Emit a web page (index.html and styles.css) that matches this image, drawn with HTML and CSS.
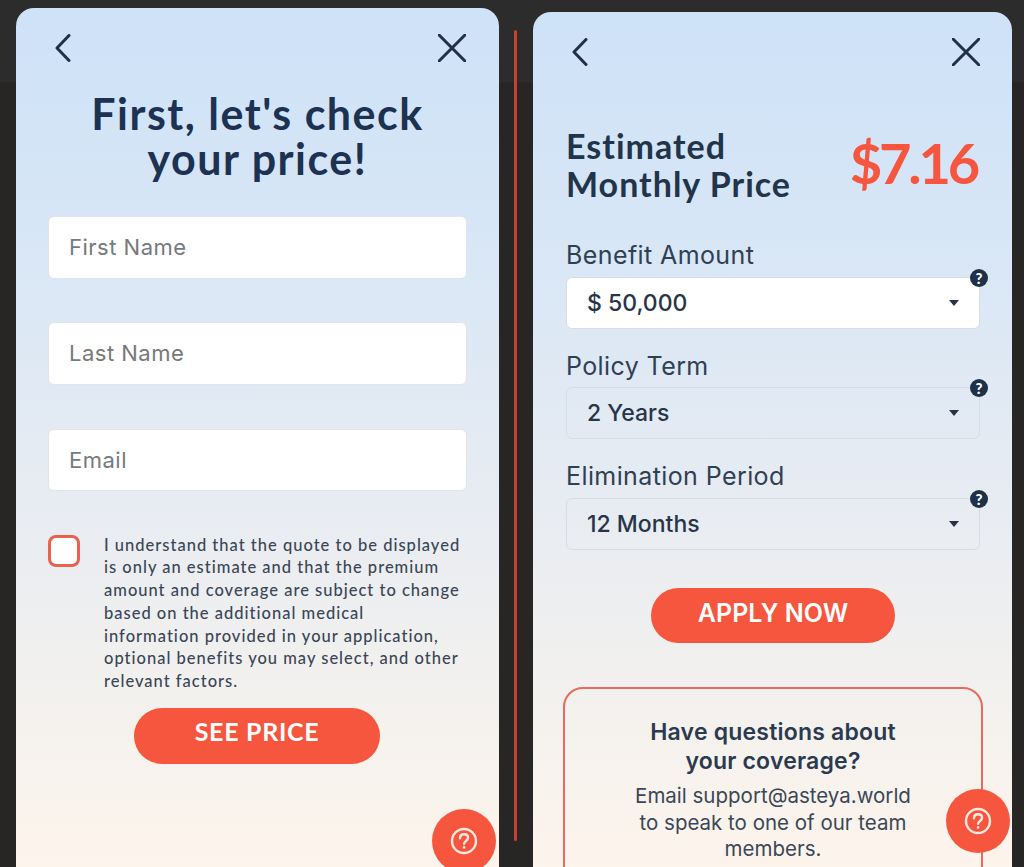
FILE: index.html
```html
<!DOCTYPE html>
<html lang="en">
<head>
    <meta charset="UTF-8">
    <title>Asteya quote</title>
    <link rel="stylesheet" href="styles.css">
</head>
<body>
    <div class="screens">
        <!-- Quote form -->
        <section class="panel panel-left">
            <div class="topbar">
                <svg class="icon-back" width="16" height="28" viewBox="0 0 16 28"><path d="M14 1.500 2 14l12 12.500"/></svg>
                <svg class="icon-close" width="28" height="28" viewBox="0 0 28 28"><path d="M1 1l26 26M27 1 1 27"/></svg>
            </div>
            <h1 class="title">First, let's check<br>your price!</h1>
            <div class="fields">
                <div class="text-input">First Name</div>
                <div class="text-input">Last Name</div>
                <div class="text-input">Email</div>
            </div>
            <div class="consent">
                <span class="checkbox"></span>
                <p>I understand that the quote to be displayed<br>is only an estimate and that the premium<br>amount and coverage are subject to change<br>based on the additional medical<br>information provided in your application,<br>optional benefits you may select, and other<br>relevant factors.</p>
            </div>
            <button class="cta cta-price">SEE PRICE</button>
            <div class="help help-left">
                <svg width="28" height="28" viewBox="0 0 28 28"><circle cx="14" cy="14" r="12"/><path d="M10 11.200c0-2.400 1.800-3.900 4.100-3.900s4 1.400 4 3.500c0 3-4 3.300-4 6"/><circle class="dot" cx="14.100" cy="20.400" r="1.300"/></svg>
            </div>
        </section>

        <div class="divider"></div>

        <!-- Estimate -->
        <section class="panel panel-right">
            <div class="topbar">
                <svg class="icon-back" width="16" height="28" viewBox="0 0 16 28"><path d="M14 1.500 2 14l12 12.500"/></svg>
                <svg class="icon-close" width="28" height="28" viewBox="0 0 28 28"><path d="M1 1l26 26M27 1 1 27"/></svg>
            </div>
            <div class="estimate">
                <h2>Estimated<br>Monthly Price</h2>
                <div class="price">$7.16</div>
            </div>
            <div class="options">
                <div class="option">
                    <label>Benefit Amount</label>
                    <div class="select select-active">$ 50,000<span class="caret"></span><span class="tip">?</span></div>
                </div>
                <div class="option">
                    <label>Policy Term</label>
                    <div class="select">2 Years<span class="caret"></span><span class="tip">?</span></div>
                </div>
                <div class="option">
                    <label>Elimination Period</label>
                    <div class="select">12 Months<span class="caret"></span><span class="tip">?</span></div>
                </div>
            </div>
            <button class="cta cta-apply">APPLY NOW</button>
            <div class="contact">
                <h3>Have questions about<br>your coverage?</h3>
                <p>Email support@asteya.world<br>to speak to one of our team<br>members.</p>
            </div>
            <div class="help help-right">
                <svg width="28" height="28" viewBox="0 0 28 28"><circle cx="14" cy="14" r="12"/><path d="M10 11.200c0-2.400 1.800-3.900 4.100-3.900s4 1.400 4 3.500c0 3-4 3.300-4 6"/><circle class="dot" cx="14.100" cy="20.400" r="1.300"/></svg>
            </div>
        </section>
    </div>
</body>
</html>
```

FILE: styles.css
```css
/* Global Styles */
* {
    margin: 0;
    padding: 0;
    box-sizing: border-box;
}

html, body {
    height: 867px;
    overflow: hidden;
}

body {
    font-family: "Inter", sans-serif;
    background: linear-gradient(#2c2c2c 0, #2c2c2c 81px, #272625 83px);
    color: #2b3a4e;
}

.screens {
    display: flex;
    align-items: flex-start;
    height: 867px;
    padding-left: 16px;
}

/* Panels */
.panel {
    position: relative;
    height: 855px;
    border-radius: 18px 18px 0 0;
    background: linear-gradient(#cee2f8 0, #d7e6f6 220px, #e8ecf2 500px, #f3f1ee 690px, #fdf4ec 855px);
}

.panel-left {
    width: 483px;
    height: 859px;
    margin-top: 8px;
    padding: 0 32px;
}

.panel-right {
    width: 479px;
    margin-top: 12px;
    padding: 0 32px 0 33px;
    overflow: hidden;
}

.divider {
    width: 3px;
    height: 811px;
    margin: 30px 16px 0 15px;
    background: #c8402f;
    border-radius: 2px;
}

.topbar {
    display: flex;
    justify-content: space-between;
    align-items: center;
    padding: 26px 1px 0 7px;
}

.panel-right .topbar {
    padding: 26px 0 0 6px;
}

.topbar svg {
    fill: none;
    stroke: #1f3148;
    stroke-width: 3;
    stroke-linecap: round;
    stroke-linejoin: round;
}

/* Left form */
.title {
    margin-top: 29px;
    font-family: "Lato", sans-serif;
    font-size: 43px;
    font-weight: 700;
    line-height: 45px;
    letter-spacing: 1.500px;
    text-align: center;
    color: #1d3252;
}

.fields {
    display: flex;
    flex-direction: column;
    gap: 43.800px;
    margin-top: 35px;
}

.text-input {
    height: 62.500px;
    padding-left: 20px;
    background: #fff;
    border: 1px solid #dfe5ec;
    border-radius: 6px;
    font-size: 22px;
    letter-spacing: 0.500px;
    line-height: 61px;
    color: #77797c;
}

.consent {
    display: flex;
    gap: 24px;
    margin-top: 42.600px;
}

.checkbox {
    flex: none;
    width: 32px;
    height: 32px;
    margin-top: 1px;
    background: #fff;
    border: 3px solid #e9614f;
    border-radius: 8px;
}

.consent p {
    font-family: "Lato", sans-serif;
    font-size: 16.500px;
    font-weight: 500;
    line-height: 22.700px;
    letter-spacing: 1px;
    white-space: nowrap;
    color: #3a4656;
}

.cta {
    display: block;
    border: none;
    background: #f6553e;
    color: #fff;
    border-radius: 30px;
    font-weight: 700;
}

.cta-price {
    width: 246px;
    height: 56px;
    margin: 15px 0 0 86px;
    padding-bottom: 9px;
    font-family: "Lato", sans-serif;
    font-size: 25px;
    letter-spacing: 0.700px;
}

.help {
    position: absolute;
    display: flex;
    align-items: center;
    justify-content: center;
    width: 64px;
    height: 64px;
    border-radius: 50%;
    background: #f6553e;
}

.help svg {
    fill: none;
    stroke: #fbeae2;
    stroke-width: 2.400;
    stroke-linecap: round;
}

.help .dot {
    fill: #fbeae2;
    stroke: none;
}

.help-left {
    left: 416px;
    top: 801px;
}

.help-right {
    left: 413px;
    top: 777px;
}

/* Right estimate */
.estimate {
    display: flex;
    justify-content: space-between;
    align-items: center;
    margin-top: 61px;
}

.estimate h2 {
    font-family: "Lato", sans-serif;
    font-size: 34px;
    font-weight: 700;
    line-height: 38px;
    letter-spacing: 1px;
    color: #213449;
}

.price {
    margin-right: 3px;
    padding-bottom: 4px;
    font-family: "Lato", sans-serif;
    font-size: 56px;
    font-weight: 700;
    line-height: 64px;
    letter-spacing: -3.200px;
    color: #f6553e;
}

.options {
    margin-top: 15px;
}

.option label {
    display: block;
    height: 58.500px;
    padding-top: 20px;
    font-size: 25px;
    letter-spacing: 0.400px;
    line-height: 34px;
    color: #2f4054;
}

.select {
    position: relative;
    height: 52px;
    padding-left: 20px;
    border: 1px solid #d8dde3;
    border-radius: 6px;
    font-size: 23px;
    font-weight: 500;
    line-height: 50px;
    color: #273549;
}

.select-active {
    background: #fff;
}

.caret {
    position: absolute;
    right: 20px;
    top: 22px;
    border-left: 5px solid transparent;
    border-right: 5px solid transparent;
    border-top: 6px solid #243347;
}

.tip {
    position: absolute;
    right: -9px;
    top: -9px;
    width: 18px;
    height: 18px;
    border-radius: 50%;
    background: #1f3148;
    color: #fff;
    font-family: "Lato", sans-serif;
    font-size: 15px;
    font-weight: 900;
    line-height: 18px;
    text-align: center;
}

.cta-apply {
    width: 244px;
    height: 55px;
    margin: 38.500px 0 0 85px;
    padding-bottom: 5px;
    font-family: "Inter", sans-serif;
    font-size: 25px;
    font-weight: 600;
}

.contact {
    width: 420px;
    height: 260px;
    margin: 44px 0 0 -3px;
    padding-top: 29px;
    border: 2px solid #e96b5c;
    border-radius: 20px;
    text-align: center;
}

.contact h3 {
    font-size: 23px;
    font-weight: 600;
    letter-spacing: 0.200px;
    line-height: 29px;
    color: #2b3a4e;
}

.contact p {
    margin-top: 7px;
    font-size: 20.500px;
    line-height: 26.500px;
    color: #3a4757;
}
```
